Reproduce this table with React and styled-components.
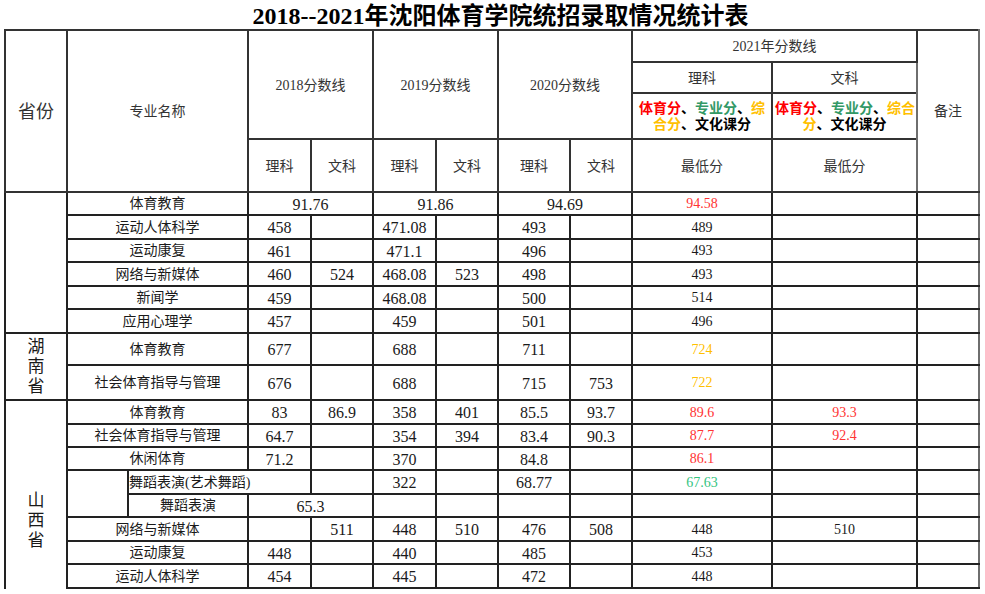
import React from 'react';
import styled, { createGlobalStyle } from 'styled-components';

const GlobalStyle = createGlobalStyle`
  html, body {
    margin: 0;
    padding: 0;
    background: #fff;
    overflow: hidden;
  }
  body {
    font-family: "Liberation Serif", "Noto Sans CJK SC", serif;
    color: #1a1a1a;
  }
`;

const tones = {
  red: '#ff3333',
  amber: '#ffc000',
  green: '#33c47f',
};

const COLS = [62, 61, 120, 63, 62, 63, 62, 72, 62, 140, 145, 62];

// 2018-2020 scores: [理2018, 文2018, 理2019, 文2019, 理2020, 文2020]
const firstGroup = [
  { name: '运动人体科学', s: ['458', '', '471.08', '', '493', ''], l21: '489' },
  { name: '运动康复', s: ['461', '', '471.1', '', '496', ''], l21: '493' },
  { name: '网络与新媒体', s: ['460', '524', '468.08', '523', '498', ''], l21: '493' },
  { name: '新闻学', s: ['459', '', '468.08', '', '500', ''], l21: '514' },
  { name: '应用心理学', s: ['457', '', '459', '', '501', ''], l21: '496' },
];

const shanxiTail = [
  { name: '网络与新媒体', s: ['', '511', '448', '510', '476', '508'], l21: '448', w21: '510' },
  { name: '运动康复', s: ['448', '', '440', '', '485', ''], l21: '453' },
  { name: '运动人体科学', s: ['454', '', '445', '', '472', ''], l21: '448' },
];

function App() {
  return (
    <Page>
      <GlobalStyle />
      <Title>2018--2021年沈阳体育学院统招录取情况统计表</Title>
      <Clip>
        <Sheet>
          <colgroup>
            {COLS.map((w, i) => (
              <col key={i} style={{ width: w }} />
            ))}
          </colgroup>
          <thead>
            <Row $h={32}>
              <Head rowSpan={4} $big>省份</Head>
              <Head rowSpan={4} colSpan={2}>专业名称</Head>
              <Head rowSpan={3} colSpan={2}>2018分数线</Head>
              <Head rowSpan={3} colSpan={2}>2019分数线</Head>
              <Head rowSpan={3} colSpan={2}>2020分数线</Head>
              <Head colSpan={2}>2021年分数线</Head>
              <Head rowSpan={4} $soft>备注</Head>
            </Row>
            <Row $h={31}>
              <Head>理科</Head>
              <Head>文科</Head>
            </Row>
            <Row $h={46}>
              <Head>
                <Legend>
                  <Mark $c="#ff0000">体育分</Mark>、<Mark $c="#339966">专业分</Mark>、<Mark $c="#ffc000">综</Mark>
                  <br />
                  <Mark $c="#ffc000">合分</Mark>、文化课分
                </Legend>
              </Head>
              <Head>
                <Legend>
                  <Mark $c="#ff0000">体育分</Mark>、<Mark $c="#339966">专业分</Mark>、<Mark $c="#ffc000">综合</Mark>
                  <br />
                  <Mark $c="#ffc000">分</Mark>、文化课分
                </Legend>
              </Head>
            </Row>
            <Row $h={53}>
              <Head>理科</Head>
              <Head>文科</Head>
              <Head>理科</Head>
              <Head>文科</Head>
              <Head>理科</Head>
              <Head>文科</Head>
              <Head>最低分</Head>
              <Head>最低分</Head>
            </Row>
          </thead>
          <tbody>
            <Row $h={23}>
              <Cell rowSpan={6} />
              <Cell colSpan={2}>体育教育</Cell>
              <Cell colSpan={2} $num>91.76</Cell>
              <Cell colSpan={2} $num>91.86</Cell>
              <Cell colSpan={2} $num>94.69</Cell>
              <Cell $latest $tone="red">94.58</Cell>
              <Cell />
              <Cell $soft />
            </Row>
            {firstGroup.map((r, i) => (
              <Row key={r.name} $h={i % 2 === 0 ? 24 : 23}>
                <Scores {...r} />
              </Row>
            ))}

            <Row $h={32}>
              <Cell rowSpan={2}>
                <Province>湖南省</Province>
              </Cell>
              <Scores name="体育教育" s={['677', '', '688', '', '711', '']} l21="724" tone="amber" />
            </Row>
            <Row $h={35}>
              <Scores name="社会体育指导与管理" s={['676', '', '688', '', '715', '753']} l21="722" tone="amber" />
            </Row>

            <Row $h={24}>
              <Cell rowSpan={10}>
                <Province>山西省</Province>
              </Cell>
              <Scores name="体育教育" s={['83', '86.9', '358', '401', '85.5', '93.7']} l21="89.6" w21="93.3" tone="red" />
            </Row>
            <Row $h={23}>
              <Scores name="社会体育指导与管理" s={['64.7', '', '354', '394', '83.4', '90.3']} l21="87.7" w21="92.4" tone="red" />
            </Row>
            <Row $h={23}>
              <Scores name="休闲体育" s={['71.2', '', '370', '', '84.8', '']} l21="86.1" tone="red" />
            </Row>
            <Row $h={24}>
              <Cell rowSpan={2} />
              <Cell colSpan={2} $left>舞蹈表演(艺术舞蹈)</Cell>
              <Cell />
              <Cell $num>322</Cell>
              <Cell />
              <Cell $num>68.77</Cell>
              <Cell />
              <Cell $latest $tone="green">67.63</Cell>
              <Cell />
              <Cell $soft />
            </Row>
            <Row $h={23}>
              <Cell>舞蹈表演</Cell>
              <Cell colSpan={2} $num>65.3</Cell>
              <Cell />
              <Cell />
              <Cell />
              <Cell />
              <Cell />
              <Cell />
              <Cell $soft />
            </Row>
            {shanxiTail.map((r, i) => (
              <Row key={r.name} $h={i % 2 === 0 ? 24 : 23}>
                <Scores {...r} />
              </Row>
            ))}
            <Row $h={26}>
              <Scores name="" s={['', '', '', '', '', '']} />
            </Row>
            <Row $h={26}>
              <Scores name="" s={['', '', '', '', '', '']} />
            </Row>
          </tbody>
        </Sheet>
      </Clip>
    </Page>
  );
}

function Scores({ name, s, l21, w21, tone }) {
  return (
    <>
      <Cell colSpan={2}>{name}</Cell>
      {s.map((v, i) => (
        <Cell key={i} $num>{v}</Cell>
      ))}
      <Cell $latest $tone={tone}>{l21}</Cell>
      <Cell $latest $tone={tone}>{w21}</Cell>
      <Cell $soft />
    </>
  );
}

export default App;

const Page = styled.div`
  width: 985px;
  height: 594px;
  overflow: hidden;
  padding-left: 4px;
  box-sizing: border-box;
`;

const Title = styled.h1`
  margin: 0;
  height: 29px;
  line-height: 33px;
  padding-left: 12px;
  font-size: 24px;
  font-weight: bold;
  text-align: center;
  color: #000;
  white-space: nowrap;
`;

const Clip = styled.div`
  height: 560px;
  overflow: hidden;
`;

const Sheet = styled.table`
  border-collapse: collapse;
  table-layout: fixed;
  width: 976px;
  border: 2px solid #6e6e6e;
`;

const Row = styled.tr`
  height: ${(p) => p.$h}px;
`;

const Head = styled.th`
  border: 2px solid #333;
  ${(p) => p.$soft && 'border-left-color: #6e6e6e; border-right-color: #6e6e6e;'}
  padding: 2px 2px 0;
  font-size: ${(p) => (p.$big ? '18px' : '14px')};
  font-weight: normal;
  line-height: 18px;
  color: #333;
  text-align: center;
  vertical-align: middle;
`;

const Legend = styled.div`
  font-weight: bold;
  font-size: 14px;
  line-height: 16px;
  color: #000;
  white-space: nowrap;
`;

const Mark = styled.span`
  color: ${(p) => p.$c};
`;

const Cell = styled.td`
  border: 2px solid #222;
  ${(p) => p.$soft && 'border-left-color: #6e6e6e; border-right-color: #6e6e6e;'}
  padding: ${(p) => (p.$num ? '2px' : '1px')} ${(p) => (p.$left ? '0' : '2px')} 0;
  font-size: ${(p) => (p.$num ? '16px' : '14px')};
  line-height: 18px;
  color: ${(p) => (p.$tone && tones[p.$tone]) || '#1a1a1a'};
  text-align: ${(p) => (p.$left ? 'left' : 'center')};
  vertical-align: middle;
  white-space: nowrap;
  overflow: hidden;
`;

const Province = styled.div`
  width: 1em;
  margin: 0 auto;
  font-size: 17px;
  line-height: 20px;
  color: #1a1a1a;
  white-space: normal;
  word-break: break-all;
`;
